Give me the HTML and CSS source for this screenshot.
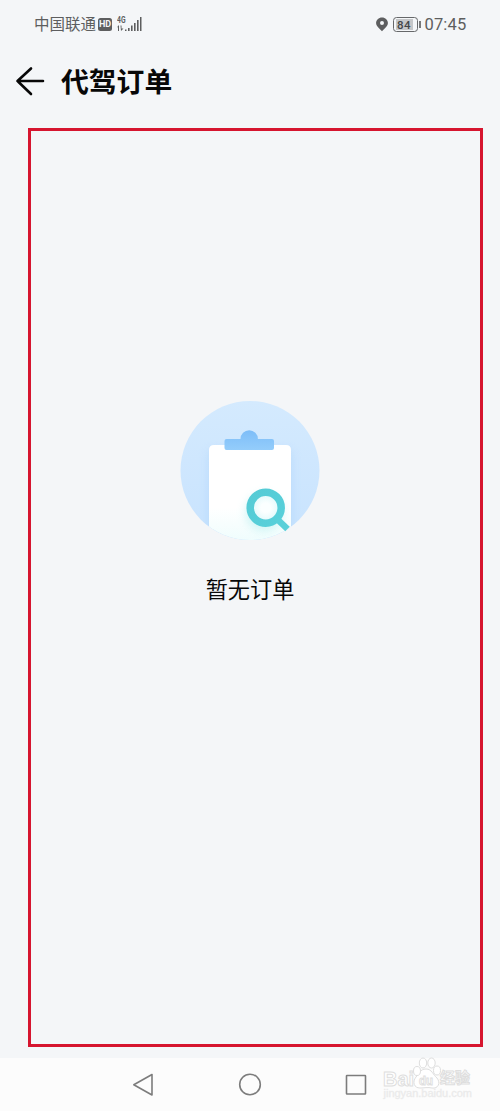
FILE: index.html
```html
<!DOCTYPE html>
<html lang="zh-CN">
<head>
<meta charset="utf-8">
<title>代驾订单</title>
<link rel="stylesheet" href="styles.css">
</head>
<body>
<div class="screen">
  <div class="status">
    <span class="carrier">中国联通</span>
    <span class="hd">HD</span>
    <svg class="signal" width="26" height="18" viewBox="0 0 26 18">
      <text class="net" x="0" y="8" textLength="8.500" lengthAdjust="spacingAndGlyphs">4G</text>
      <path class="fill" d="M0 12.300L2 10v6H1v-3.700zM3.500 10.500h1v3h2L4 16zM8 14.500h1.500V16H8zM11 13h1.600v3H11zM14 10.500h1.600V16H14zM17 8h1.600v8H17zM20 5h1.600v11H20zM23 2h1.500v14H23z"/>
    </svg>
    <svg class="pin" width="12" height="15" viewBox="0 0 12 15">
      <path class="fill" fill-rule="evenodd" d="M6 .4C2.600.4.1 2.900.1 6 .1 9.300 3.500 11.500 6 14.300 8.500 11.500 11.900 9.300 11.900 6 11.900 2.900 9.400.4 6 .4zm0 3.600a2 2 0 1 1 0 4 2 2 0 0 1 0-4z"/>
    </svg>
    <span class="battery"><span class="level">84</span></span>
    <span class="nub"></span>
    <span class="time">07:45</span>
  </div>
  <header class="header">
    <svg class="back" width="30" height="30" viewBox="0 0 30 30">
      <path d="M16 2.500L2.500 15 16 28M2.500 15H28"/>
    </svg>
    <h1 class="title">代驾订单</h1>
  </header>
  <main class="frame">
    <svg class="empty" width="140" height="140" viewBox="0 0 140 140">
      <defs>
        <linearGradient id="sky" x1="0" y1="0" x2="0" y2="1">
          <stop offset="0" stop-color="#d4eafe"/><stop offset="1" stop-color="#c8e3fe"/>
        </linearGradient>
        <linearGradient id="paper" x1="0" y1="0" x2="0" y2="1">
          <stop offset=".65" stop-color="#fff"/><stop offset="1" stop-color="#effdfd"/>
        </linearGradient>
        <linearGradient id="clip" x1="0" y1="0" x2="0" y2="1">
          <stop offset="0" stop-color="#7dbdf8"/><stop offset="1" stop-color="#94cdfb"/>
        </linearGradient>
        <linearGradient id="lens" x1="0" y1="0" x2="1" y2="1">
          <stop offset="0" stop-color="#55cbd5"/><stop offset="1" stop-color="#58d0da"/>
        </linearGradient>
        <radialGradient id="glass">
          <stop offset=".3" stop-color="#fbffff"/><stop offset="1" stop-color="#dcf8fa"/>
        </radialGradient>
        <filter id="soft" x="-50%" y="-50%" width="200%" height="200%"><feGaussianBlur stdDeviation="4"/></filter>
        <clipPath id="disc"><circle cx="70" cy="69.500" r="69.500"/></clipPath>
      </defs>
      <g clip-path="url(#disc)">
        <rect width="140" height="140" fill="url(#sky)"/>
        <rect x="27" y="48" width="86" height="90" rx="6" fill="#a9d2fb" opacity=".4" filter="url(#soft)"/>
        <path d="M29 140V49q0-5 5-5h72q5 0 5 5v91z" fill="url(#paper)"/>
        <circle cx="84" cy="111" r="19" fill="#9ce9e9" opacity=".4" filter="url(#soft)"/>
      </g>
      <path d="M60.500 38a8.700 8.700 0 0 1 17.400 0H92q2 0 2 2v7q0 2-2 2H46.500q-2 0-2-2v-7q0-2 2-2z" fill="url(#clip)"/>
      <circle cx="85.700" cy="106.700" r="15.500" fill="url(#glass)" stroke="url(#lens)" stroke-width="7.500"/>
      <path d="M97 118l10.500 10" stroke="#59d0d9" stroke-width="6.500"/>
    </svg>
    <p class="message">暂无订单</p>
  </main>
  <nav class="nav">
    <svg class="key" width="24" height="24" viewBox="0 0 24 24"><path d="M20 1.500v20.500L1.800 11.800z"/></svg>
    <svg class="key" width="24" height="24" viewBox="0 0 24 24"><circle cx="12" cy="11.500" r="10.300"/></svg>
    <svg class="key" width="24" height="24" viewBox="0 0 24 24"><rect x="2.500" y="2.500" width="19" height="18.500" rx=".5"/></svg>
  </nav>
  <svg class="watermark" width="100" height="48" viewBox="0 0 100 48">
    <text class="wm-brand" x="3" y="30.500" textLength="31" lengthAdjust="spacingAndGlyphs">Bai</text>
    <path d="M46 14c-6 0-7 5-10 8-4 5-2 11 4 11 4 0 8-1 12 0 6 1 9-5 5-10-4-3-5-9-11-9z"/>
    <ellipse cx="37" cy="16" rx="3.500" ry="4.500"/>
    <ellipse cx="43" cy="8" rx="3.700" ry="5"/>
    <ellipse cx="51.500" cy="8" rx="3.700" ry="5"/>
    <ellipse cx="57" cy="15.500" rx="3.500" ry="4.500"/>
    <text class="wm-du" x="39" y="29.500" textLength="14" lengthAdjust="spacingAndGlyphs">du</text>
    <text class="wm-cn" x="60" y="28" textLength="30" lengthAdjust="spacingAndGlyphs">经验</text>
    <text class="wm-url" x="3.500" y="42" textLength="88.500" lengthAdjust="spacingAndGlyphs">jingyan.baidu.com</text>
  </svg>
</div>
</body>
</html>
```
FILE: styles.css
```css
body {
  margin: 0;
  background: #f4f6f8;
  color: #080808;
  font-family: Roboto, "Noto Sans CJK SC", sans-serif;
}

.screen {
  position: relative;
  display: flex;
  flex-direction: column;
  height: 1111px;
  overflow: hidden;
}

.status {
  display: flex;
  align-items: center;
  box-sizing: border-box;
  height: 48px;
  padding: 0 33px 0 34px;
  color: #5d5e5f;
}

.carrier {
  width: 64px;
  padding-top: 2px;
  font-size: 15.5px;
  line-height: 24px;
  white-space: nowrap;
}

.hd {
  width: 14px;
  height: 13px;
  border-radius: 2.500px;
  background: #5d5e5f;
  color: #f4f6f8;
  font-size: 9px;
  font-weight: 700;
  line-height: 13px;
  text-align: center;
}

.signal {
  margin-left: 5px;
}

.net {
  fill: #5d5e5f;
  font-size: 9px;
  font-weight: 700;
}

.fill {
  fill: #5d5e5f;
}

.pin {
  margin-left: auto;
}

.battery {
  box-sizing: border-box;
  width: 25px;
  height: 15px;
  margin-left: 5px;
  padding: 1px;
  border: 1.500px solid #66686a;
  border-radius: 3.500px;
}

.level {
  display: block;
  width: 17px;
  height: 11px;
  margin-left: 1px;
  background: #c5c7c9;
  color: #444648;
  font-size: 11.500px;
  font-weight: 500;
  line-height: 12px;
  letter-spacing: .5px;
  text-align: center;
}

.nub {
  width: 2px;
  height: 7px;
  margin: 0 4px 0 1px;
  background: #77797a;
}

.time {
  width: 42.500px;
  padding-top: 1px;
  font-size: 16.500px;
  line-height: 24px;
  letter-spacing: .15px;
  white-space: nowrap;
}

.header {
  display: flex;
  align-items: center;
  height: 66px;
  padding-left: 15px;
}

.back {
  fill: none;
  stroke: #080808;
  stroke-width: 2.600;
  stroke-linecap: round;
  stroke-linejoin: round;
}

.title {
  margin: 0 0 0 16px;
  padding-top: 3px;
  font-size: 27.800px;
  font-weight: 700;
  line-height: 40px;
}

.frame {
  display: flex;
  flex-direction: column;
  align-items: center;
  box-sizing: border-box;
  width: 455px;
  height: 919px;
  margin: 14px 0 0 28px;
  padding: 270px 11px 0 0;
  border: 3px solid #d6152f;
}

.message {
  margin: 33px 0 0;
  font-size: 22.200px;
  line-height: 32px;
}

.nav {
  display: flex;
  justify-content: center;
  gap: 82px;
  box-sizing: border-box;
  height: 53px;
  margin-top: 11px;
  padding-top: 15px;
  background: #fcfcfc;
}

.key {
  fill: none;
  stroke: #7c7c7c;
  stroke-width: 1.600;
  stroke-linejoin: round;
}

.watermark {
  position: absolute;
  left: 380px;
  top: 1055px;
  fill: #fff;
  stroke: #dedede;
  stroke-width: 1;
}

.wm-brand {
  font: 700 21px "Liberation Sans", sans-serif;
}

.wm-du {
  font: 700 13px "Liberation Sans", sans-serif;
}

.wm-cn {
  font: 700 15px "Noto Sans CJK SC", sans-serif;
}

.wm-url {
  fill: #ebebeb;
  stroke: #ebebeb;
  stroke-width: .3;
  font: 10px "Liberation Sans", sans-serif;
}
```
